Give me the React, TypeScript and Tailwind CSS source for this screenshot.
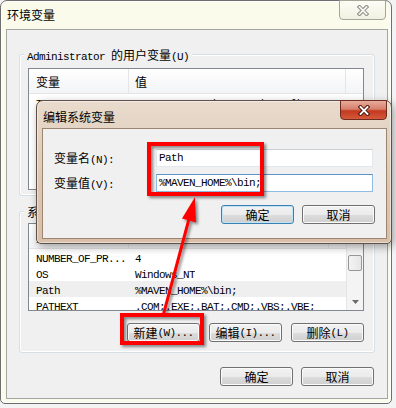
import React from "react";

const mono = "font-['Liberation_Mono',monospace] text-[11px] tracking-[-0.6px]";
const cjk = "font-['Noto_Sans_CJK_SC',sans-serif] text-[12px]";

// split ascii / CJK runs so each gets its own font
function Txt({ s }: { s: string }) {
  const parts = s.match(/[\x00-\x7f]+|[^\x00-\x7f]+/g) ?? [];
  return (
    <>
      {parts.map((p, i) => (
        <span key={i} className={/^[\x00-\x7f]/.test(p) ? mono : cjk}>
          {p}
        </span>
      ))}
    </>
  );
}

const btn =
  "flex h-[19px] w-[73px] items-center justify-center rounded-[3px] border border-[#707070] bg-[linear-gradient(#f2f2f2_0%,#ebebeb_50%,#dddddd_51%,#cfcfcf_100%)] shadow-[inset_0_0_0_1px_#fbfbfb] leading-[12px] text-black whitespace-nowrap";
const btnFocus =
  "flex h-[19px] w-[73px] items-center justify-center rounded-[3px] border border-[#3c7fb1] bg-[linear-gradient(#f2f2f2_0%,#ebebeb_50%,#dddddd_51%,#cfcfcf_100%)] shadow-[inset_0_0_0_1px_#bfe2f7] leading-[12px] text-black whitespace-nowrap";

function CloseX({ outline, fill }: { outline: string; fill: string }) {
  return (
    <svg width="12" height="11" viewBox="0 0 12 11">
      <path d="M2.5 2 L9.5 9 M9.5 2 L2.5 9" stroke={outline} strokeWidth="3.8" strokeLinecap="square" />
      <path d="M2.5 2 L9.5 9 M9.5 2 L2.5 9" stroke={fill} strokeWidth="1.8" strokeLinecap="square" />
    </svg>
  );
}

function Row({ name, value, sel }: { name: string; value: string; sel?: boolean }) {
  return (
    <div className={sel ? "flex h-[16px] items-center bg-[#efefef] leading-[16px]" : "flex h-[16px] items-center leading-[16px]"}>
      <div className="w-[100px] shrink-0 overflow-hidden whitespace-nowrap pl-[7px]">
        <Txt s={name} />
      </div>
      <div className="overflow-hidden whitespace-nowrap pl-[6px]">
        <Txt s={value} />
      </div>
    </div>
  );
}

function Header() {
  return (
    <div className="flex h-[25px] shrink-0 border-b border-[#e5e5e5] bg-[linear-gradient(#ffffff,#f3f4f6)] leading-[24px]">
      <div className="w-[100px] border-r border-[#e5e5e5] pl-[7px]">
        <Txt s="变量" />
      </div>
      <div className="flex-1 border-r border-[#e5e5e5] pl-[6px]">
        <Txt s="值" />
      </div>
      <div className="w-[17px]" />
    </div>
  );
}

export default function App() {
  const sysVars = [
    { name: "NUMBER_OF_PR...", value: "4" },
    { name: "OS", value: "Windows_NT" },
    { name: "Path", value: "%MAVEN_HOME%\\bin;", sel: true },
    { name: "PATHEXT", value: ".COM;.EXE;.BAT;.CMD;.VBS;.VBE;" },
  ];

  return (
    <div className="relative h-[408px] w-[396px] overflow-hidden bg-[#f3f3f3] text-black">
      {/* environment variables window */}
      <div className="flex h-[404px] w-[392px] flex-col rounded-t-[7px] rounded-b-[5px] border border-[#6e6e6e] bg-[#fbfbec] shadow-[inset_0_0_0_1px_#ffffff]">
        <div className="flex h-[28px] shrink-0 items-start justify-between">
          <div className="pl-[6px] pt-[7px] leading-[12px]">
            <Txt s="环境变量" />
          </div>
          <div className="-mt-px mr-[5px] flex h-[20px] w-[47px] items-center justify-center rounded-b-[4px] border border-[#a6a697] bg-[linear-gradient(#fdfdf6,#f0f0e2)]">
            <CloseX outline="#8a8a84" fill="#f4f4f0" />
          </div>
        </div>

        <div className="ml-[5px] mr-[3px] flex h-[370px] flex-col border border-[#a5a5a5] bg-[#f0f0f0]">
          {/* user variables */}
          <div className="mx-[12px] mt-[24px] h-[142px] rounded-[3px] border border-[#d5dfe5] px-[8px] shadow-[inset_0_0_0_1px_#ffffff]">
            <div className="-ml-[4px] -mt-[7px] h-[12px] w-fit bg-[#f0f0f0] px-[3px] leading-[12px]">
              <Txt s="Administrator 的用户变量(U)" />
            </div>
            <div className="mt-[8px] flex h-[122px] w-[336px] flex-col overflow-hidden border border-[#828790] bg-white">
              <Header />
              <Row name="TEMP" value="%USERPROFILE%\AppData\Local\Temp" />
            </div>
          </div>

          {/* system variables */}
          <div className="mx-[12px] mt-[15px] h-[142px] rounded-[3px] border border-[#d5dfe5] px-[8px] shadow-[inset_0_0_0_1px_#ffffff]">
            <div className="-ml-[4px] -mt-[7px] h-[12px] w-fit bg-[#f0f0f0] px-[3px] leading-[12px]">
              <Txt s="系统变量(S)" />
            </div>
            <div className="mt-[6px] flex h-[88px] w-[336px] overflow-hidden border border-[#828790] bg-white">
              <div className="flex w-[317px] flex-col">
                <Header />
                {sysVars.map((v) => (
                  <Row key={v.name} name={v.name} value={v.value} sel={v.sel} />
                ))}
              </div>
              <div className="flex w-[17px] flex-col border-l border-[#e6e6e6] bg-[#f4f4f4]">
                <div className="h-[17px] shrink-0" />
                <div className="h-[14px] shrink-0" />
                <div className="mx-[1px] h-[16px] shrink-0 rounded-[2px] border border-[#979797] bg-[linear-gradient(90deg,#f3f3f3,#e6e6e6)]" />
                <div className="flex-1" />
                <div className="flex h-[17px] shrink-0 items-center justify-center">
                  <svg width="7" height="4" viewBox="0 0 7 4">
                    <path d="M0 0 H7 L3.5 4 Z" fill="#6b6b6b" />
                  </svg>
                </div>
              </div>
            </div>
            <div className="mt-[12px] flex w-[336px] justify-end gap-[9px]">
              <div className={btn}>
                <Txt s="新建(W)..." />
              </div>
              <div className={btn}>
                <Txt s="编辑(I)..." />
              </div>
              <div className={btn}>
                <Txt s="删除(L)" />
              </div>
            </div>
          </div>

          <div className="mt-[14px] flex justify-end gap-[8px] pr-[13px]">
            <div className={btn}>
              <Txt s="确定" />
            </div>
            <div className={btn}>
              <Txt s="取消" />
            </div>
          </div>
        </div>
      </div>

      {/* edit system variable dialog */}
      <div className="absolute left-[36px] top-[100px] flex h-[144px] w-[356px] flex-col rounded-t-[7px] rounded-b-[5px] border border-[#5d5046] bg-[linear-gradient(180deg,#e9dbcd_0%,#dcc6b2_60%,#d8bfa9_100%)] shadow-[2px_3px_8px_rgba(0,0,0,0.35),inset_0_0_0_1px_rgba(255,255,255,0.45)]">
        <div className="flex h-[27px] shrink-0 items-start justify-between">
          <div className="pl-[6px] pt-[9px] leading-[12px]">
            <Txt s="编辑系统变量" />
          </div>
          <div className="-mt-px mr-[4px] flex h-[20px] w-[47px] items-center justify-center rounded-b-[4px] border border-[#6e2b20] bg-[linear-gradient(#e8ab9b_0%,#d7806c_45%,#c3391f_55%,#d4593b_100%)]">
            <CloseX outline="#4a150d" fill="#ffffff" />
          </div>
        </div>
        <div className="ml-[5px] mr-[4px] flex h-[111px] flex-col border border-[#9c8672] bg-[#f0f0f0] pl-[11px] pr-[11px] pt-[20px]">
          <div className="flex h-[18px] items-center leading-[12px]">
            <div className="w-[102px]">
              <Txt s="变量名(N):" />
            </div>
            <div className="flex h-[18px] w-[217px] items-center border border-[#e2e7ec] border-t-[#c9ced3] bg-white pl-[2px] leading-[16px]">
              <Txt s="Path" />
            </div>
          </div>
          <div className="mt-[7px] flex h-[18px] items-center leading-[12px]">
            <div className="w-[102px]">
              <Txt s="变量值(V):" />
            </div>
            <div className="flex h-[18px] w-[217px] items-center border border-[#8fbbe4] border-t-[#5d92c4] bg-white pl-[2px] leading-[16px]">
              <Txt s="%MAVEN_HOME%\bin;" />
            </div>
          </div>
          <div className="mt-[13px] flex justify-end gap-[8px]">
            <div className={btnFocus}>
              <Txt s="确定" />
            </div>
            <div className={btn}>
              <Txt s="取消" />
            </div>
          </div>
        </div>
      </div>

      {/* red annotations */}
      <svg className="pointer-events-none absolute left-0 top-0" width="396" height="408" viewBox="0 0 396 408">
        <defs>
          <filter id="sh" x="-20%" y="-20%" width="140%" height="140%">
            <feDropShadow dx="2" dy="2" stdDeviation="1.5" floodColor="#000" floodOpacity="0.45" />
          </filter>
        </defs>
        <g filter="url(#sh)">
          <rect x="149" y="144" width="113" height="50" fill="none" stroke="#ff0000" strokeWidth="4" />
          <rect x="122" y="315" width="80" height="28" fill="none" stroke="#ff0000" strokeWidth="4" />
          <line x1="163" y1="316" x2="189" y2="219" stroke="#ff0000" strokeWidth="3" />
          <polygon points="195,197 196,222.5 182,218.5" fill="#ff0000" />
        </g>
      </svg>
    </div>
  );
}
